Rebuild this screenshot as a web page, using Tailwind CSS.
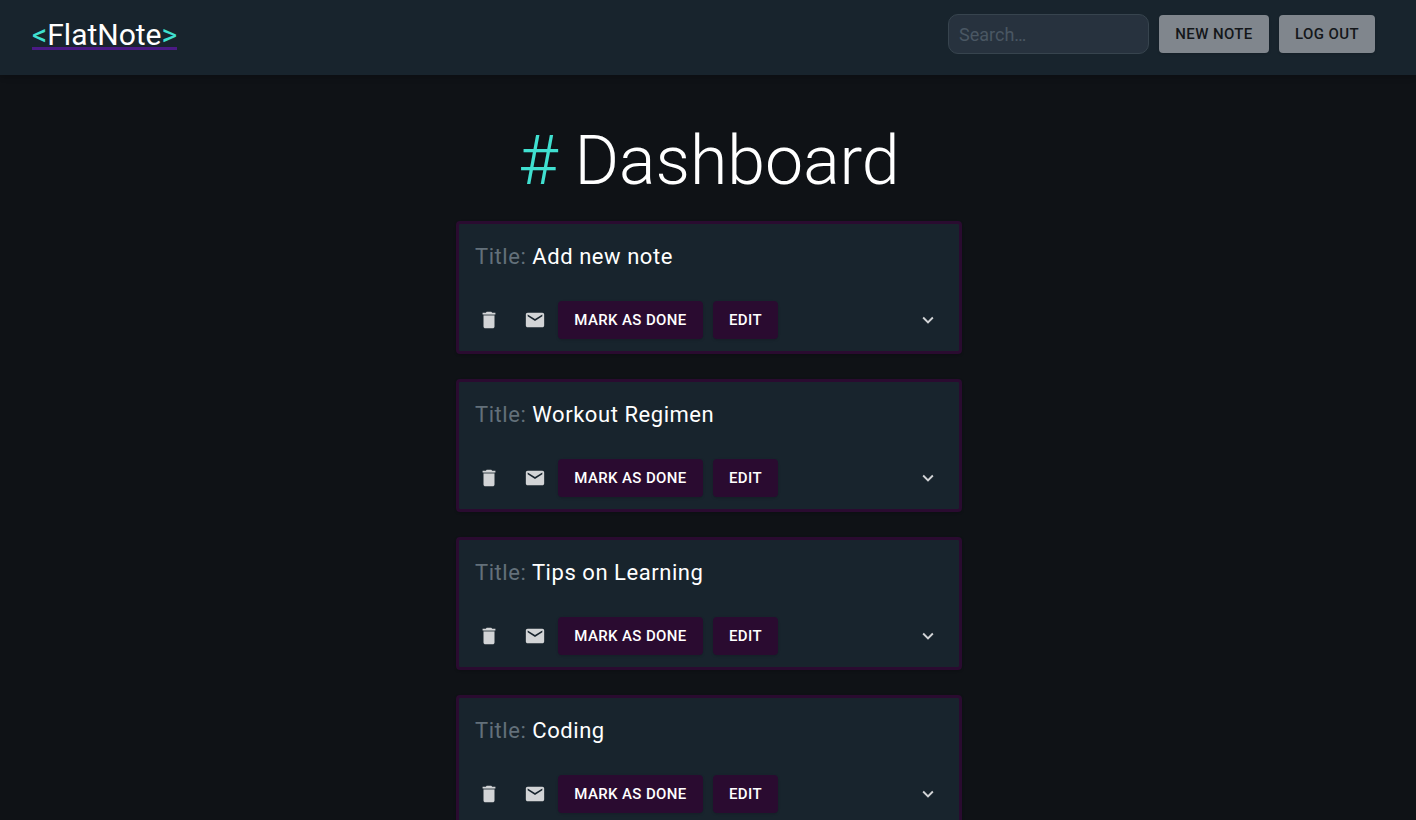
<!DOCTYPE html>
<html lang="en">
<head>
<meta charset="utf-8">
<meta name="viewport" content="width=device-width, initial-scale=1">
<title>FlatNote</title>
<script src="https://cdn.jsdelivr.net/npm/@tailwindcss/browser@4"></script>
</head>
<body class="min-h-screen bg-[#0f1216] font-[Roboto,sans-serif] text-white">
<svg class="hidden" aria-hidden="true">
  <symbol id="trash" viewBox="0 0 24 24"><path d="M6 19c0 1.100.9 2 2 2h8c1.100 0 2-.9 2-2V7H6v12z"/><path d="M19 4h-3.500l-1-1h-5l-1 1H5v2h14V4z"/><path d="M6 6h12v1H6z" opacity=".45"/></symbol>
  <symbol id="mail" viewBox="0 0 24 24"><path d="M20 4H4c-1.100 0-1.990.9-1.990 2L2 18c0 1.100.9 2 2 2h16c1.100 0 2-.9 2-2V6c0-1.100-.9-2-2-2zm0 4l-8 5-8-5V6l8 5 8-5v2z"/></symbol>
  <symbol id="chevron" viewBox="0 0 24 24"><path d="M16.590 8.590L12 13.170 7.410 8.590 6 10l6 6 6-6z"/></symbol>
</svg>
<header class="flex h-[75px] items-start justify-between bg-[#18242d] pr-[41px] pl-8 pt-3.5 shadow-md">
  <a href="#" class="mt-2 border-b-3 border-[#4b1a85] text-[30px] leading-[25px]"><span class="text-[#40e0d0]">&lt;</span>FlatNote<span class="text-[#40e0d0]">&gt;</span></a>
  <div class="flex items-center gap-2.5">
    <input type="search" aria-label="Search notes" placeholder="Search…" class="h-10 w-[201px] rounded-[10px] border border-[#37444e] bg-[#27323e] px-2.5 text-lg outline-none placeholder:text-[#4a5763]">
    <button class="h-[38px] w-[110px] rounded bg-[#80868d] text-[15px] font-medium tracking-wide text-[#14171a] shadow-sm">NEW NOTE</button>
    <button class="h-[38px] w-24 rounded bg-[#80868d] text-[15px] font-medium tracking-wide text-[#14171a] shadow-sm">LOG OUT</button>
  </div>
</header>
<main class="flex flex-col items-center pt-[45px] pl-0.5">
  <h1 class="mb-[18px] text-[68px] leading-[83px] font-light"><span class="text-[#40e0d0]">#</span> Dashboard</h1>
  <div class="flex w-full max-w-[506px] flex-col gap-[25px]">
    <article class="rounded border-3 border-[#2a0b30] bg-[#18242d] shadow-sm">
      <h2 class="px-4 pt-[15px] pb-[23px] text-[22px] leading-9 tracking-wide"><span class="text-[#63707a]">Title:</span> Add new note</h2>
      <div class="flex items-center px-2 pb-3 pt-[3px]">
        <button aria-label="Delete" class="flex h-[38px] w-[44px] items-center justify-center text-[#d2d4d6]"><svg class="size-[22px] fill-current"><use href="#trash"/></svg></button>
        <button aria-label="Email" class="flex h-[38px] w-[47px] items-center justify-center text-[#d2d4d6]"><svg class="size-[22px] fill-current"><use href="#mail"/></svg></button>
        <button class="h-[38px] w-[145px] rounded bg-[#2a0b30] text-[15px] font-medium tracking-wide shadow-sm">MARK AS DONE</button>
        <button class="ml-2.5 h-[38px] rounded bg-[#2a0b30] px-4 text-[15px] font-medium tracking-wide shadow-sm">EDIT</button>
        <button aria-label="Expand" class="ml-auto flex h-[38px] w-[46px] items-center justify-center text-[#d2d4d6]"><svg class="size-[22px] fill-current"><use href="#chevron"/></svg></button>
      </div>
    </article>
    <article class="rounded border-3 border-[#2a0b30] bg-[#18242d] shadow-sm">
      <h2 class="px-4 pt-[15px] pb-[23px] text-[22px] leading-9 tracking-wide"><span class="text-[#63707a]">Title:</span> Workout Regimen</h2>
      <div class="flex items-center px-2 pb-3 pt-[3px]">
        <button aria-label="Delete" class="flex h-[38px] w-[44px] items-center justify-center text-[#d2d4d6]"><svg class="size-[22px] fill-current"><use href="#trash"/></svg></button>
        <button aria-label="Email" class="flex h-[38px] w-[47px] items-center justify-center text-[#d2d4d6]"><svg class="size-[22px] fill-current"><use href="#mail"/></svg></button>
        <button class="h-[38px] w-[145px] rounded bg-[#2a0b30] text-[15px] font-medium tracking-wide shadow-sm">MARK AS DONE</button>
        <button class="ml-2.5 h-[38px] rounded bg-[#2a0b30] px-4 text-[15px] font-medium tracking-wide shadow-sm">EDIT</button>
        <button aria-label="Expand" class="ml-auto flex h-[38px] w-[46px] items-center justify-center text-[#d2d4d6]"><svg class="size-[22px] fill-current"><use href="#chevron"/></svg></button>
      </div>
    </article>
    <article class="rounded border-3 border-[#2a0b30] bg-[#18242d] shadow-sm">
      <h2 class="px-4 pt-[15px] pb-[23px] text-[22px] leading-9 tracking-wide"><span class="text-[#63707a]">Title:</span> Tips on Learning</h2>
      <div class="flex items-center px-2 pb-3 pt-[3px]">
        <button aria-label="Delete" class="flex h-[38px] w-[44px] items-center justify-center text-[#d2d4d6]"><svg class="size-[22px] fill-current"><use href="#trash"/></svg></button>
        <button aria-label="Email" class="flex h-[38px] w-[47px] items-center justify-center text-[#d2d4d6]"><svg class="size-[22px] fill-current"><use href="#mail"/></svg></button>
        <button class="h-[38px] w-[145px] rounded bg-[#2a0b30] text-[15px] font-medium tracking-wide shadow-sm">MARK AS DONE</button>
        <button class="ml-2.5 h-[38px] rounded bg-[#2a0b30] px-4 text-[15px] font-medium tracking-wide shadow-sm">EDIT</button>
        <button aria-label="Expand" class="ml-auto flex h-[38px] w-[46px] items-center justify-center text-[#d2d4d6]"><svg class="size-[22px] fill-current"><use href="#chevron"/></svg></button>
      </div>
    </article>
    <article class="rounded border-3 border-[#2a0b30] bg-[#18242d] shadow-sm">
      <h2 class="px-4 pt-[15px] pb-[23px] text-[22px] leading-9 tracking-wide"><span class="text-[#63707a]">Title:</span> Coding</h2>
      <div class="flex items-center px-2 pb-3 pt-[3px]">
        <button aria-label="Delete" class="flex h-[38px] w-[44px] items-center justify-center text-[#d2d4d6]"><svg class="size-[22px] fill-current"><use href="#trash"/></svg></button>
        <button aria-label="Email" class="flex h-[38px] w-[47px] items-center justify-center text-[#d2d4d6]"><svg class="size-[22px] fill-current"><use href="#mail"/></svg></button>
        <button class="h-[38px] w-[145px] rounded bg-[#2a0b30] text-[15px] font-medium tracking-wide shadow-sm">MARK AS DONE</button>
        <button class="ml-2.5 h-[38px] rounded bg-[#2a0b30] px-4 text-[15px] font-medium tracking-wide shadow-sm">EDIT</button>
        <button aria-label="Expand" class="ml-auto flex h-[38px] w-[46px] items-center justify-center text-[#d2d4d6]"><svg class="size-[22px] fill-current"><use href="#chevron"/></svg></button>
      </div>
    </article>
  </div>
</main>
</body>
</html>
